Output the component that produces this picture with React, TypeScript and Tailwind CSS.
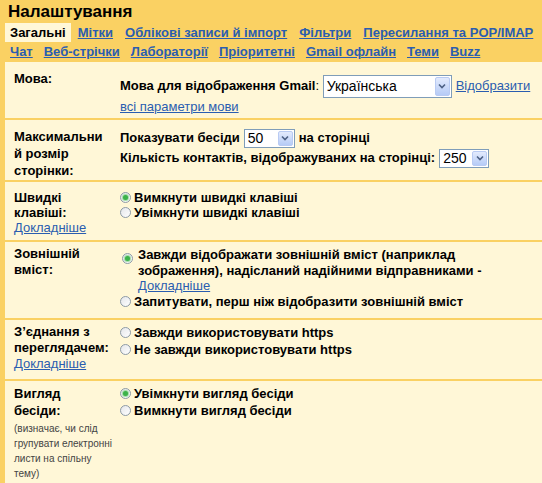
import React from "react";

const LINK = "text-[#2a5db0] underline";

const Radio = ({ checked }: { checked?: boolean }) => (
  <span className="relative inline-flex h-[11px] w-[11px] shrink-0 items-center justify-center rounded-full border border-[#8d9aa6] bg-gradient-to-br from-[#e4e6ea] to-white">
    {checked && <span className="h-[5px] w-[5px] rounded-full bg-[#3cb24a] shadow-[0_0_1px_1px_#9ad99f]" />}
  </span>
);

const Select = ({ value, w, h }: { value: string; w: string; h: string }) => (
  <span className={`inline-flex items-stretch border border-[#7f9db9] bg-white font-normal ${w} ${h}`}>
    <span className="flex flex-1 items-center pl-[3px] text-[14px] leading-none">{value}</span>
    <span className="m-[1px] flex w-[15px] items-center justify-center rounded-[2px] border border-[#b9cbf3] bg-gradient-to-b from-[#e3ebfd] to-[#b6cbf6]">
      <svg width="8" height="6" viewBox="0 0 8 6">
        <path d="M1 1.5 L4 4.5 L7 1.5" fill="none" stroke="#4d6185" strokeWidth="1.6" />
      </svg>
    </span>
  </span>
);

const tabsTop = ["Мітки", "Облікові записи й імпорт", "Фільтри", "Пересилання та POP/IMAP"];
const tabsBottom = ["Чат", "Веб-стрічки", "Лабораторії", "Пріоритетні", "Gmail офлайн", "Теми", "Buzz"];

export default function App() {
  return (
    <div className="h-[483px] w-[542px] overflow-hidden bg-[#fad163] font-['Liberation_Sans',Arial,sans-serif] text-[13px] text-black">
      <div className="h-[23px] pl-[8px] pt-[1px] text-[17px] font-bold leading-[21px]">Налаштування</div>

      <div className="flex h-[19px] gap-[2px] whitespace-nowrap pl-[5px] font-bold leading-[19px]">
        <span className="shrink-0 bg-[#fff7d7] px-[5px]">Загальні</span>
        {tabsTop.map((t) => (
          <span key={t} className={`shrink-0 px-[5px] ${LINK}`}>{t}</span>
        ))}
      </div>
      <div className="flex h-[19px] gap-[1px] whitespace-nowrap pl-[5px] font-bold leading-[19px]">
        {tabsBottom.map((t) => (
          <span key={t} className={`shrink-0 px-[5px] ${LINK}`}>{t}</span>
        ))}
      </div>

      <div className="ml-[5px] mt-[1px] bg-[#fff7d7]">
        {/* Мова */}
        <div className="grid grid-cols-[115px_1fr] border-b-2 border-[#fad163]">
          <div className="pl-[9px] pt-[9px] font-bold leading-[16px]">Мова:</div>
          <div className="pb-[3px] pt-[12px]">
            <div className="flex h-[24px] items-center whitespace-nowrap">
              <span className="font-bold">Мова для відображення Gmail</span>
              <span>:&nbsp;</span>
              <Select value="Українська" w="w-[129px]" h="h-[23px]" />
              <span className={`ml-[4px] ${LINK}`}>Відобразити</span>
            </div>
            <div className={`mt-[1px] leading-[16px] ${LINK}`}>всі параметри мови</div>
          </div>
        </div>

        {/* Розмір сторінки */}
        <div className="grid grid-cols-[115px_1fr] border-b-2 border-[#fad163]">
          <div className="pb-[1px] pl-[9px] pt-[8px] font-bold leading-[17px]">
            Максимальни
            <br />й розмір
            <br />
            сторінки:
          </div>
          <div className="pt-[8px] font-bold">
            <div className="flex h-[20px] items-center gap-[4px]">
              <span>Показувати бесіди</span>
              <Select value="50" w="w-[51px]" h="h-[19px]" />
              <span>на сторінці</span>
            </div>
            <div className="flex h-[20px] items-center gap-[4px]">
              <span>Кількість контактів, відображуваних на сторінці:</span>
              <Select value="250" w="w-[50px]" h="h-[19px]" />
            </div>
          </div>
        </div>

        {/* Швидкі клавіші */}
        <div className="grid grid-cols-[115px_1fr] border-b-2 border-[#fad163]">
          <div className="pb-[5px] pl-[9px] pt-[8px] leading-[15px]">
            <div className="font-bold">Швидкі</div>
            <div className="font-bold">клавіші:</div>
            <div className={LINK}>Докладніше</div>
          </div>
          <div className="pt-[8px] font-bold leading-[15px]">
            <div className="flex items-center gap-[3px]">
              <Radio checked />
              <span>Вимкнути швидкі клавіші</span>
            </div>
            <div className="flex items-center gap-[3px]">
              <Radio />
              <span>Увімкнути швидкі клавіші</span>
            </div>
          </div>
        </div>

        {/* Зовнішній вміст */}
        <div className="grid grid-cols-[115px_1fr] border-b-2 border-[#fad163]">
          <div className="pl-[9px] pt-[4px] font-bold leading-[16px]">
            Зовнішній
            <br />
            вміст:
          </div>
          <div className="pb-[9px] pt-[5px] leading-[15.5px]">
            <div className="flex items-start gap-[5px] pl-[2px]">
              <span className="mt-[2px]">
                <Radio checked />
              </span>
              <div>
                <span className="font-bold">Завжди відображати зовнішній вміст (наприклад зображення), надісланий надійними відправниками -</span>
                <br />
                <span className={LINK}>Докладніше</span>
              </div>
            </div>
            <div className="flex items-center gap-[3px] font-bold">
              <Radio />
              <span>Запитувати, перш ніж відобразити зовнішній вміст</span>
            </div>
          </div>
        </div>

        {/* З'єднання */}
        <div className="grid grid-cols-[115px_1fr] border-b-2 border-[#fad163]">
          <div className="pb-[7px] pl-[9px] pt-[4px] leading-[16px]">
            <div className="font-bold">З’єднання з</div>
            <div className="font-bold">переглядачем:</div>
            <div className={LINK}>Докладніше</div>
          </div>
          <div className="pt-[4px] font-bold leading-[17px]">
            <div className="flex items-center gap-[3px]">
              <Radio />
              <span>Завжди використовувати https</span>
            </div>
            <div className="flex items-center gap-[3px]">
              <Radio />
              <span>Не завжди використовувати https</span>
            </div>
          </div>
        </div>

        {/* Вигляд бесіди */}
        <div className="grid grid-cols-[115px_1fr] border-b-2 border-[#fad163]">
          <div className="pb-[5px] pl-[9px] pt-[4px]">
            <div className="font-bold leading-[17px]">Вигляд</div>
            <div className="font-bold leading-[17px]">бесіди:</div>
            <div className="mt-[2px] text-[10px] leading-[15px] text-[#444]">
              (визначає, чи слід
              <br />
              групувати електронні
              <br />
              листи на спільну
              <br />
              тему)
            </div>
          </div>
          <div className="pt-[4px] font-bold leading-[17px]">
            <div className="flex items-center gap-[3px]">
              <Radio checked />
              <span>Увімкнути вигляд бесіди</span>
            </div>
            <div className="flex items-center gap-[3px]">
              <Radio />
              <span>Вимкнути вигляд бесіди</span>
            </div>
          </div>
        </div>
        <div className="h-[10px]" />
      </div>
    </div>
  );
}
